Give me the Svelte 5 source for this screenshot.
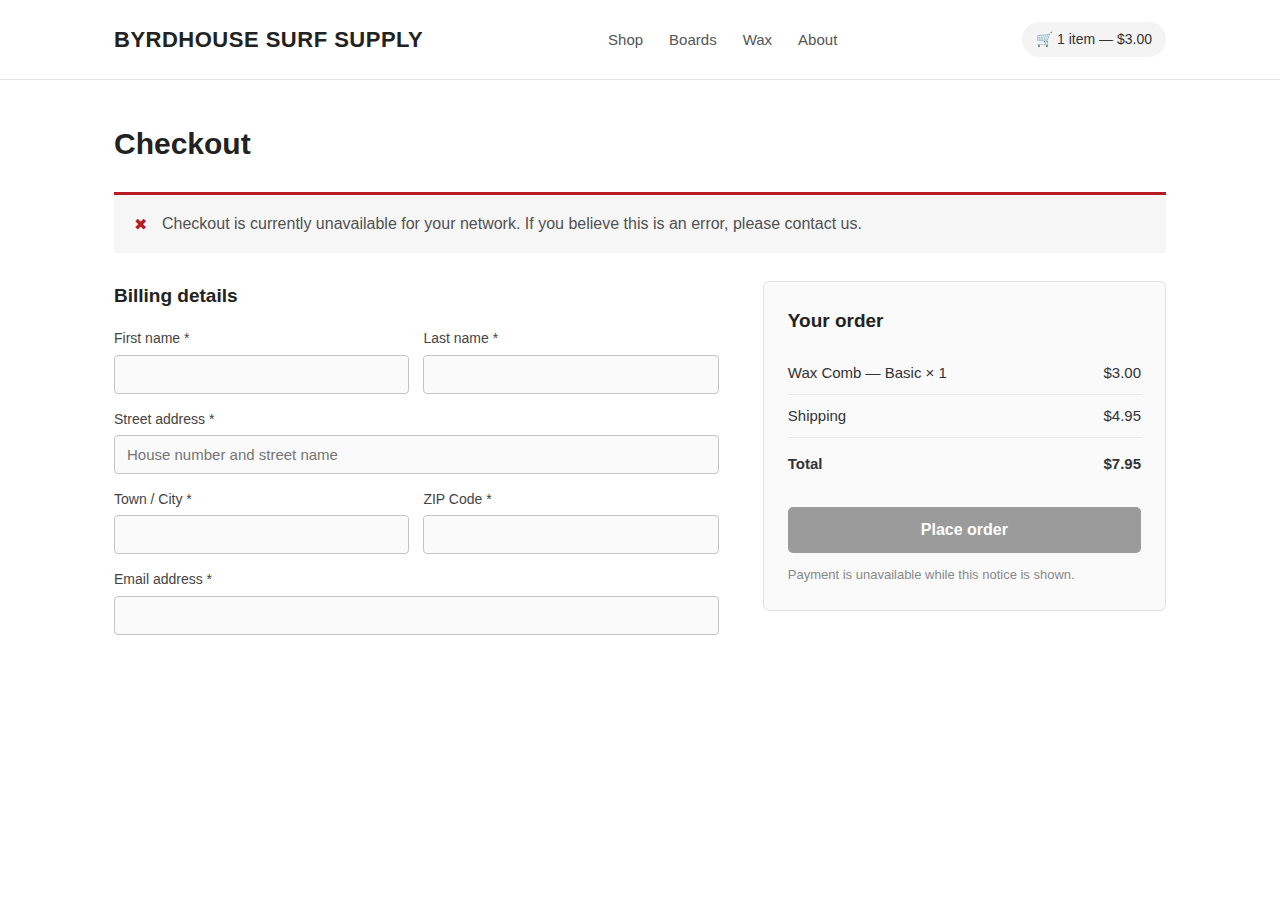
<script>
    let items = [
        { name: "Wax Comb — Basic × 1", price: 3 },
        { name: "Shipping", price: 4.95 },
    ];
    const links = ["Shop", "Boards", "Wax", "About"];

    let fields = [
        { id: "first-name", label: "First name" },
        { id: "last-name", label: "Last name" },
        { id: "address", label: "Street address", wide: true, placeholder: "House number and street name" },
        { id: "city", label: "Town / City" },
        { id: "zip", label: "ZIP Code" },
        { id: "email", label: "Email address", wide: true },
    ];

    $: total = items.reduce((sum, item) => sum + item.price, 0);
</script>

<header>
    <div class="container header-inner">
        <div class="logo">BYRDHOUSE SURF SUPPLY</div>
        <nav>
            {#each links as link}
                <a href="#top">{link}</a>
            {/each}
        </nav>
        <div class="cart">🛒 1 item — $3.00</div>
    </div>
</header>

<main class="container">
    <h1>Checkout</h1>

    <div class="notice" role="alert">
        <span class="notice-icon">✖</span>
        <div>Checkout is currently unavailable for your network. If you believe this is an error, please contact us.</div>
    </div>

    <div class="columns">
        <form>
            <h2>Billing details</h2>
            <div class="fields">
                {#each fields as field}
                    <div class="field" class:wide={field.wide}>
                        <label for={field.id}>{field.label} *</label>
                        <input id={field.id} type="text" placeholder={field.placeholder} disabled />
                    </div>
                {/each}
            </div>
        </form>

        <aside>
            <h2>Your order</h2>
            {#each items as item}
                <div class="line">
                    <span>{item.name}</span>
                    <span>${item.price.toFixed(2)}</span>
                </div>
            {/each}
            <div class="line total">
                <span>Total</span>
                <span>${total.toFixed(2)}</span>
            </div>
            <button disabled>Place order</button>
            <p>Payment is unavailable while this notice is shown.</p>
        </aside>
    </div>
</main>

<style>
    :global(body) {
        margin: 0;
        background: #fff;
        color: #333;
        font-family: "Liberation Sans", Arial, sans-serif;
        line-height: 1.6;
    }

    .container {
        max-width: 1052px;
        margin: 0 auto;
    }

    header {
        border-bottom: 1px solid #e2e2e2;
    }

    .header-inner {
        display: flex;
        justify-content: space-between;
        align-items: center;
        padding: 22px 0;
    }

    .logo {
        color: #222;
        font-size: 22px;
        font-weight: bold;
        letter-spacing: 0.5px;
    }

    nav {
        display: flex;
        gap: 26px;
    }

    nav a {
        color: #555;
        font-size: 15px;
        text-decoration: none;
    }

    .cart {
        padding: 6px 14px;
        border-radius: 20px;
        background: #f4f4f4;
        font-size: 14px;
    }

    h1 {
        margin: 40px 0 24px;
        color: #222;
        font-size: 30px;
    }

    .notice {
        display: flex;
        align-items: flex-start;
        gap: 15px;
        margin-bottom: 28px;
        padding: 16px 20px;
        border-top: 3px solid #b81c23;
        border-radius: 0 0 3px 3px;
        background: #f6f6f6;
        color: #515151;
        font-size: 16px;
    }

    .notice-icon {
        margin-top: 2px;
        color: #b81c23;
        font-size: 16px;
        line-height: 23px;
    }

    .columns {
        display: grid;
        grid-template-columns: 1.5fr 1fr;
        gap: 44px;
        align-items: start;
    }

    h2 {
        margin: 0 0 16px;
        color: #222;
        font-size: 19px;
    }

    .fields {
        display: grid;
        grid-template-columns: 1fr 1fr;
        gap: 14px;
    }

    .wide {
        grid-column: span 2;
    }

    label {
        display: block;
        margin-bottom: 5px;
        color: #444;
        font-size: 14px;
    }

    input {
        display: block;
        box-sizing: border-box;
        width: 100%;
        height: 39px;
        padding: 0 12px;
        border: 1px solid #c4c4c4;
        border-radius: 4px;
        background: #fafafa;
        font-family: inherit;
        font-size: 15px;
    }

    input::placeholder {
        color: #757575;
    }

    aside {
        padding: 24px;
        border: 1px solid #e2e2e2;
        border-radius: 6px;
        background: #fafafa;
    }

    .line {
        display: flex;
        justify-content: space-between;
        padding: 9px 0;
        border-bottom: 1px solid #e8e8e8;
        font-size: 15px;
    }

    .total {
        padding-top: 14px;
        border-bottom: none;
        font-weight: bold;
    }

    button {
        display: block;
        width: 100%;
        height: 46px;
        margin-top: 22px;
        border: none;
        border-radius: 5px;
        background: #9b9b9b;
        color: #fff;
        font-family: inherit;
        font-size: 16px;
        font-weight: bold;
    }

    p {
        margin: 12px 0 0;
        color: #888;
        font-size: 13px;
    }
</style>
